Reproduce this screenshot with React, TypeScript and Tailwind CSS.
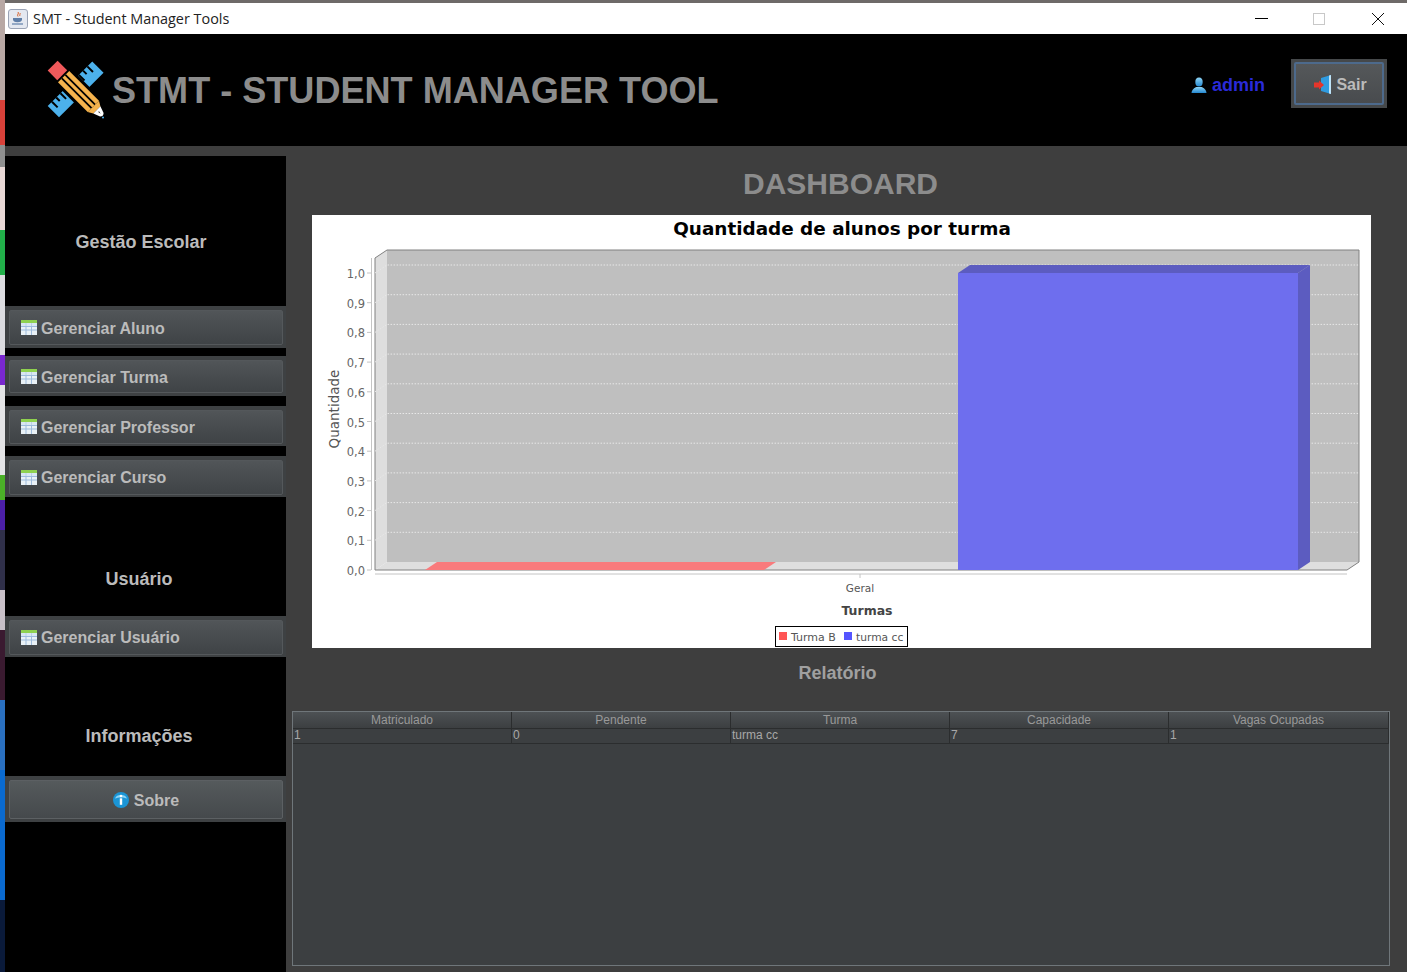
const sans = "font-['Liberation_Sans',Arial,sans-serif]";

const desktopStrip = [
  { h: 100, c: "#b8a8a4" },
  { h: 45, c: "#d8413a" },
  { h: 22, c: "#8f8f8f" },
  { h: 63, c: "#e8d8d6" },
  { h: 45, c: "#22b04a" },
  { h: 80, c: "#dcdce0" },
  { h: 30, c: "#7a28d0" },
  { h: 90, c: "#e4e4e6" },
  { h: 25, c: "#4bb028" },
  { h: 30, c: "#4b1fa8" },
  { h: 60, c: "#30304a" },
  { h: 40, c: "#c8c0c8" },
  { h: 70, c: "#3a1a30" },
  { h: 70, c: "#2a70c0" },
  { h: 130, c: "#0a6ad0" },
  { h: 72, c: "#0a1a3a" },
];

function JavaIcon() {
  return (
    <svg width="20" height="20" viewBox="0 0 20 20">
      <rect x="0.5" y="0.5" width="19" height="19" rx="2.5" fill="#e4e8f0" stroke="#9aa3b5" />
      <path d="M10 3c1.5 1.5-1.5 2.5 0 4.5M12 4c.8 1-1 1.8 0 3" stroke="#d9622b" strokeWidth="1" fill="none" />
      <path d="M5 9h9v1.2c0 2-1.5 3-4.500 3s-4.500-1-4.500-3z" fill="#5f7fa8" />
      <path d="M4 15h11" stroke="#5f7fa8" strokeWidth="1.200" />
    </svg>
  );
}

function Logo() {
  return (
    <svg width="58" height="60" viewBox="0 0 58 60" className="shrink-0">
      <g transform="rotate(-45 29 29)">
        <rect x="-3" y="21" width="63" height="16" fill="#4cb1ec" />
        <path d="M3 21v8M9 21v5M15 21v8M41 21v8M47 21v5M53 21v8" stroke="#000" strokeWidth="2" />
      </g>
      <g transform="rotate(45 29 29)">
        <rect x="-5" y="18" width="74" height="22" fill="#000" />
        <rect x="-4" y="22" width="13.500" height="14" fill="#f0595b" />
        <rect x="11.500" y="21" width="42" height="16" fill="#f5b34d" />
        <path d="M11.500 26.500h42M11.500 31.500h42" stroke="#000" strokeWidth="1.800" />
        <path d="M53.500 21l5 3v10l-5 3z" fill="#f5b34d" />
        <path d="M58.500 24l7 2.500q2.500 2.500 0 5l-7 2.500z" fill="#fff" />
        <path d="M61 28.500l3 .500-3 .500z" fill="#000" />
      </g>
      <circle cx="56" cy="57.500" r="1" fill="#4cb1ec" />
    </svg>
  );
}

function UserIcon() {
  return (
    <svg width="16" height="17" viewBox="0 0 16 17">
      <defs>
        <linearGradient id="userGrad" x1="0" y1="0" x2="0" y2="1">
          <stop offset="0" stopColor="#8fd4f5" />
          <stop offset="1" stopColor="#2387cf" />
        </linearGradient>
      </defs>
      <ellipse cx="8" cy="5" rx="3.700" ry="4.500" fill="url(#userGrad)" />
      <path d="M0.500 16c.3-3.500 3-5.500 5-6h5c2 .5 4.700 2.500 5 6z" fill="url(#userGrad)" />
    </svg>
  );
}

function DoorIcon() {
  return (
    <svg width="17" height="19" viewBox="0 0 17 19" className="shrink-0">
      <path d="M7 3l10-3v19L7 16z" fill="#2f9be0" />
      <path d="M15 .6V18.400l2 .6V0z" fill="#bfe3f7" />
      <path d="M0 7.500h5V5.500L10 10l-5 4.500V12.500H0z" fill="#e5352b" />
    </svg>
  );
}

function TableIcon() {
  return (
    <svg width="16" height="15" viewBox="0 0 16 15" className="mb-[1px] shrink-0">
      <rect width="16" height="15" fill="#e9f1f6" />
      <rect width="16" height="3" fill="#8fd14f" />
      <path d="M0 6.500h16M0 10h16M5 3v12M10.500 3v12" stroke="#9dbbdc" strokeWidth="1" />
      <rect y="3" width="16" height="3" fill="#cfe0ee" opacity="0.6" />
    </svg>
  );
}

function InfoIcon() {
  return (
    <svg width="16" height="16" viewBox="0 0 16 16" className="shrink-0">
      <circle cx="8" cy="8" r="8" fill="#1b95d6" />
      <path d="M2 6.500a6.300 5 0 0 1 12 0c-3-1.500-9-1.500-12 0z" fill="#8fd4f5" />
      <circle cx="8" cy="4" r="1.300" fill="#fff" />
      <rect x="6.800" y="6.300" width="2.400" height="6.500" fill="#fff" />
    </svg>
  );
}

function SideButton({ label, h = "h-[35px]", band, labelClass = "" }: { label: string; h?: string; band: string; labelClass?: string }) {
  return (
    <div className={`${band} bg-[#3e4143] pl-[4px] pr-[3px] pt-[4px]`}>
      <div className={`${h} flex items-center gap-[4px] rounded-[2px] border border-[#54585b] bg-gradient-to-b from-[#515558] to-[#3f4346] pl-[11px]`}>
        <TableIcon />
        <span className={`text-[16px] font-bold text-[#bbbbbb] ${labelClass}`}>{label}</span>
      </div>
    </div>
  );
}

function Sidebar() {
  return (
    <aside className="flex h-[816px] w-[281px] shrink-0 flex-col bg-black">
      <div className="flex h-[150px] items-end justify-center pb-[53px] pr-[13px] pl-[4px] text-[18px] font-bold leading-[21px] text-[#bbbbbb]">
        Gestão Escolar
      </div>
      <SideButton label="Gerenciar Aluno" band="h-[42px]" labelClass="pt-[2px]" />
      <div className="h-[8px]" />
      <SideButton label="Gerenciar Turma" band="h-[40px]" h="h-[33px]" labelClass="pt-[2px]" />
      <div className="h-[10px]" />
      <SideButton label="Gerenciar Professor" band="h-[40px]" h="h-[34px]" labelClass="pt-[2px]" />
      <div className="h-[10px]" />
      <SideButton label="Gerenciar Curso" band="h-[41px]" />
      <div className="flex h-[119px] items-end justify-center pb-[26px] pr-[13px] text-[18px] font-bold leading-[21px] text-[#bbbbbb]">
        Usuário
      </div>
      <SideButton label="Gerenciar Usuário" band="h-[41px]" />
      <div className="flex h-[119px] items-end justify-center pb-[29px] pr-[13px] text-[18px] font-bold leading-[21px] text-[#bbbbbb]">
        Informações
      </div>
      <div className="h-[46px] bg-[#3e4143] pl-[4px] pr-[3px] pt-[4px]">
        <div className="flex h-[39px] items-center justify-center gap-[5px] rounded-[2px] border border-[#5c6063] bg-gradient-to-b from-[#555a5c] to-[#45494c]">
          <InfoIcon />
          <span className="pt-[2px] text-[16px] font-bold text-[#bbbbbb]">Sobre</span>
        </div>
      </div>
    </aside>
  );
}

const dejavu = "'DejaVu Sans', Verdana, sans-serif";
const ticks = ["0,0", "0,1", "0,2", "0,3", "0,4", "0,5", "0,6", "0,7", "0,8", "0,9", "1,0"];

function Chart() {
  return (
    <div className="h-[433px] w-[1059px] bg-white">
      <svg width="1059" height="433" viewBox="312 215 1059 433">
        <text x="842" y="235" textAnchor="middle" fontFamily={dejavu} fontWeight="700" fontSize="18.400" fill="#000">
          Quantidade de alunos por turma
        </text>

        <rect x="387" y="250" width="972" height="312" fill="#bfbfbf" />
        <polygon points="375,258 387,250 387,562 375,570" fill="#dedede" />
        <polygon points="375,570 387,562 1359,562 1347,570" fill="#dedede" />
        <path d="M375 570V258L387 250H1359V562L1347 570H375" fill="none" stroke="#808080" strokeWidth="1" />

        {ticks.map((t, i) => {
          const y = 570 - i * 29.7;
          return (
            <g key={t}>
              {i > 0 && <path d={`M375 ${y}L387 ${y - 8}H1359`} stroke="#e8e8e8" strokeWidth="1" strokeDasharray="1.500 1.500" fill="none" />}
              <path d={`M367 ${y}H371`} stroke="#c4c4c4" />
              <text x="365" y={y + 5} textAnchor="end" fontFamily={dejavu} fontSize="11.500" fill="#666666">
                {t}
              </text>
            </g>
          );
        })}

        <path d="M371.500 258V570M375 574H1347M860 574V578" stroke="#c4c4c4" fill="none" />

        <polygon points="425,570 437,562 776,562 764,570" fill="#f97a7c" />

        <polygon points="958,273 970,265 1310,265 1298,273" fill="#5c5cc0" />
        <polygon points="1298,273 1310,265 1310,562 1298,570" fill="#5c5cc0" />
        <rect x="958" y="273" width="340" height="297" fill="#6e6eee" />

        <text x="860" y="592" textAnchor="middle" fontFamily={dejavu} fontSize="10.500" fill="#555555">
          Geral
        </text>
        <text x="867" y="615" textAnchor="middle" fontFamily={dejavu} fontWeight="700" fontSize="12.500" fill="#444444">
          Turmas
        </text>
        <text
          transform="translate(339 409) rotate(-90)"
          textAnchor="middle"
          fontFamily={dejavu}
          fontSize="13.500"
          fill="#555555"
        >
          Quantidade
        </text>

        <rect x="775.500" y="626.500" width="132" height="20" fill="#fff" stroke="#000" />
        <rect x="779" y="632" width="8" height="8" fill="#ff5555" />
        <text x="791" y="641" fontFamily={dejavu} fontSize="11" fill="#555555">
          Turma B
        </text>
        <rect x="844" y="632" width="8" height="8" fill="#5555ff" />
        <text x="856" y="641" fontFamily={dejavu} fontSize="10.700" fill="#555555">
          turma cc
        </text>
      </svg>
    </div>
  );
}

const columns = ["Matriculado", "Pendente", "Turma", "Capacidade", "Vagas Ocupadas"];
const row = ["1", "0", "turma cc", "7", "1"];

function ReportTable() {
  return (
    <div className="ml-[6px] h-[255px] w-[1098px] border border-[#6f767a] bg-[#3c3f41] text-[12px] leading-[15px]">
      <div className="grid h-[16px] grid-cols-[219px_219px_219px_219px_1fr] bg-gradient-to-b from-[#4d5154] to-[#3c3f41] text-[#999999]">
        {columns.map((c) => (
          <div key={c} className="border-r border-b border-[#2b2d2e] pt-[1px] text-center">
            {c}
          </div>
        ))}
      </div>
      <div className="grid h-[16px] grid-cols-[219px_219px_219px_219px_1fr] text-[#a8a8a8]">
        {row.map((c, i) => (
          <div key={i} className="border-r border-b border-[#2b2d2e] pl-[1px]">
            {c}
          </div>
        ))}
      </div>
    </div>
  );
}

export default function App() {
  return (
    <div className={`flex h-[972px] w-[1407px] overflow-hidden ${sans}`}>
      <div className="flex w-[5px] shrink-0 flex-col">
        {desktopStrip.map((s, i) => (
          <div key={i} style={{ height: s.h, backgroundColor: s.c }} />
        ))}
      </div>

      <div className="flex min-w-0 flex-1 flex-col">
        <div className="h-[3px] bg-[#6e6a68]" />

        <div className="flex h-[31px] items-center bg-white pl-[3px] font-['Open_Sans',sans-serif] text-[14.4px] text-[#222222]">
          <JavaIcon />
          <span className="ml-[5px]">SMT - Student Manager Tools</span>
          <div className="ml-auto flex items-center">
            <span className="h-px w-[13px] bg-black" />
            <span className="ml-[45px] h-[12px] w-[12px] border border-[#c8c8c8]" />
            <svg width="12" height="12" viewBox="0 0 12 12" className="ml-[47px] mr-[23px]">
              <path d="M0 0L12 12M12 0L0 12" stroke="#111111" strokeWidth="1" />
            </svg>
          </div>
        </div>

        <header className="flex h-[112px] items-center bg-black pl-[42px] pr-[20px]">
          <Logo />
          <h1 className="ml-[7px] pt-[3px] text-[36.100px] font-bold text-[#8c8c8c]">STMT - STUDENT MANAGER TOOL</h1>
          <div className="mb-[10px] ml-auto flex items-center gap-[5px] text-[18px] font-bold text-[#2a2ad8]">
            <UserIcon />
            admin
          </div>
          <div className="mb-[13px] ml-[26px] h-[49px] w-[96px] bg-[#45484a] p-[3px]">
            <div className="flex h-full items-center justify-center gap-[5px] rounded-[2px] border-2 border-[#4d6a8c] bg-gradient-to-b from-[#55585a] to-[#484b4e] pl-[3px] pt-[2px]">
              <DoorIcon />
              <span className="text-[16px] font-bold text-[#bbbbbb]">Sair</span>
            </div>
          </div>
        </header>

        <div className="flex flex-1 bg-[#3e3e3e] pt-[10px]">
          <Sidebar />
          <main className="min-w-0 flex-1">
            <h2 className="mt-[9px] h-[50px] pr-[12px] pt-[1px] text-center text-[30px] font-bold leading-[36px] text-[#8c8c8c]">
              DASHBOARD
            </h2>
            <div className="pl-[26px]">
              <Chart />
            </div>
            <div className="mt-[13px] h-[50px] pr-[18px] text-center text-[18px] font-bold leading-[24px] text-[#a0a0a0]">
              Relatório
            </div>
            <ReportTable />
          </main>
        </div>
      </div>
    </div>
  );
}
